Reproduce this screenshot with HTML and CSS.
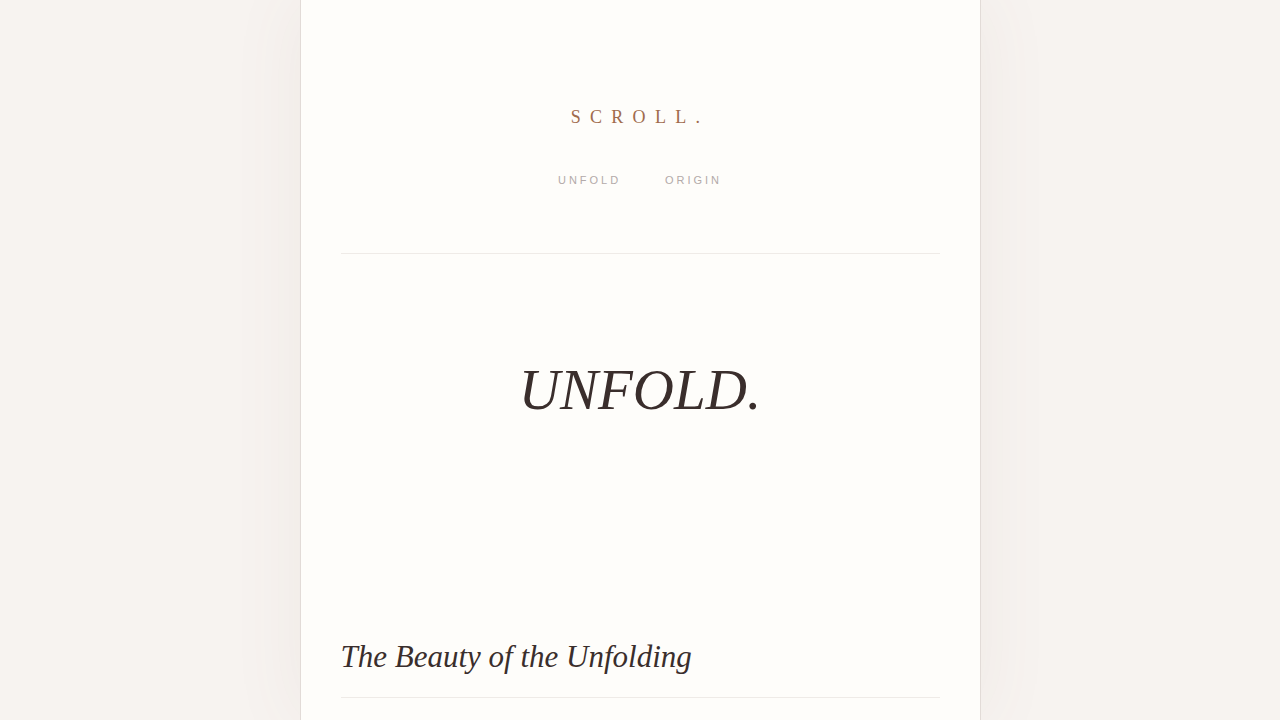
FILE: index.html
```html
<!DOCTYPE html>
<html lang="en">
<head>
<meta charset="utf-8">
<title>Scroll.</title>
<link rel="stylesheet" href="styles.css">
</head>
<body>
<div class="page">
  <header class="site-header">
    <div class="logo">SCROLL.</div>
    <nav class="nav">
      <a href="#">UNFOLD</a>
      <a href="#">ORIGIN</a>
    </nav>
  </header>
  <section class="hero">
    <h1 class="hero-title">UNFOLD.</h1>
  </section>
  <article class="article">
    <h2 class="article-title">The Beauty of the Unfolding</h2>
  </article>
</div>
</body>
</html>
```

FILE: styles.css
```css
html, body {
  margin: 0;
  padding: 0;
}
body {
  background: #f7f3f0;
  min-height: 100vh;
  overflow: hidden;
}
.page {
  width: 681px;
  margin: 0 auto;
  min-height: 100vh;
  background: #fefdfa;
  border-left: 1px solid #e2dbd7;
  border-right: 1px solid #e2dbd7;
  box-shadow: 0 0 70px rgba(130, 100, 80, 0.07);
  box-sizing: border-box;
  padding: 0 40px;
}
.site-header {
  padding-top: 106px;
  padding-bottom: 66px;
  border-bottom: 1px solid #efebe7;
  display: flex;
  flex-direction: column;
  align-items: center;
}
.logo {
  font-family: "Liberation Serif", "DejaVu Serif", serif;
  font-size: 18px;
  line-height: 22px;
  letter-spacing: 9.3px;
  color: #a06b4c;
}
.nav {
  display: flex;
  gap: 44px;
  margin-top: 45px;
}
.nav a {
  font-family: "Liberation Sans", Arial, sans-serif;
  font-size: 11px;
  line-height: 14px;
  letter-spacing: 0.27em;
  color: #b3aaa9;
  text-decoration: none;
}
.hero {
  display: flex;
  justify-content: center;
  padding-top: 100px;
  padding-bottom: 211px;
}
.hero-title {
  margin: 0;
  font-family: "Liberation Serif", "DejaVu Serif", serif;
  font-style: italic;
  font-weight: normal;
  font-size: 57px;
  line-height: 72px;
  color: #3a2e2c;
}
.article-title {
  margin: 0;
  font-family: "Liberation Serif", "DejaVu Serif", serif;
  font-style: italic;
  font-weight: normal;
  font-size: 31px;
  line-height: 40px;
  color: #3a2e2c;
  padding-bottom: 20px;
  border-bottom: 1px solid #efebe7;
}
```
